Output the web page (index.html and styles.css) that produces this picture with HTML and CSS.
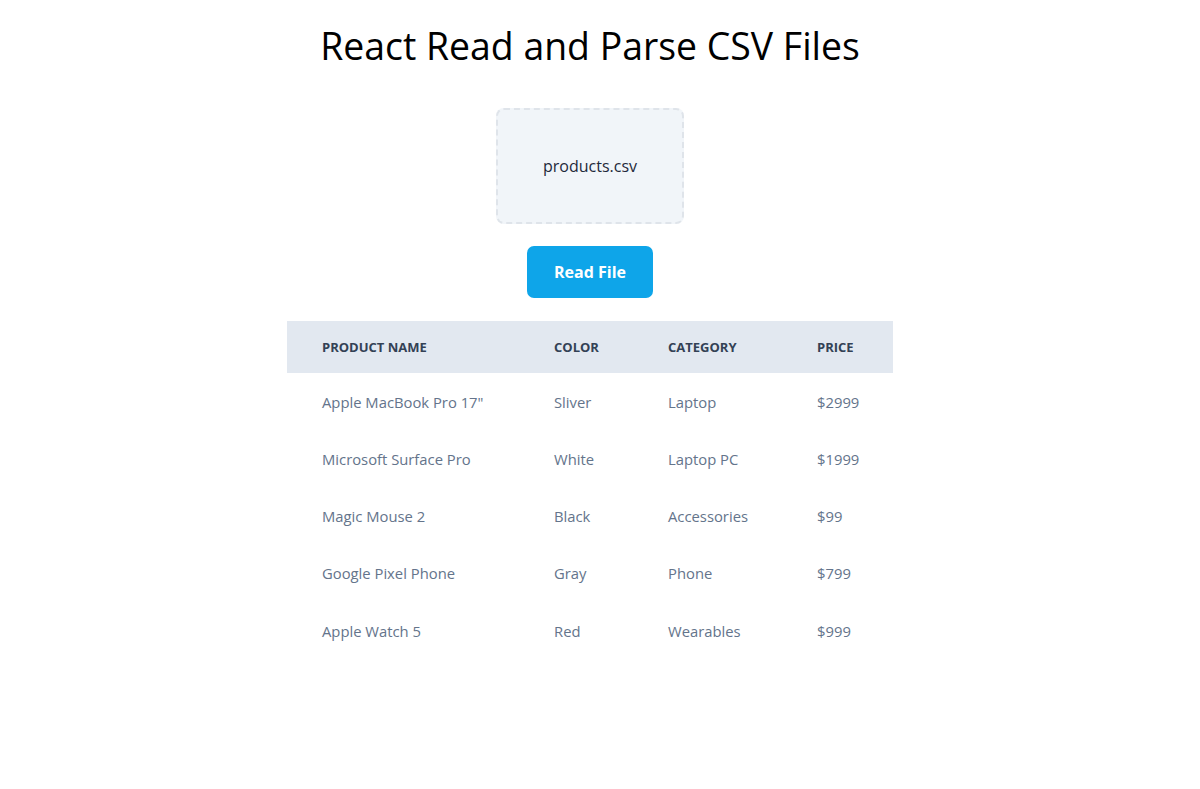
FILE: index.html
```html
<!DOCTYPE html>
<html lang="en">
<head>
<meta charset="utf-8">
<title>React Read and Parse CSV Files</title>
<link rel="stylesheet" href="styles.css">
</head>
<body>
<main class="page">
  <h1 class="title">React Read and Parse CSV Files</h1>
  <div class="dropzone"><span class="file-name">products.csv</span></div>
  <button class="read-btn" type="button">Read File</button>
  <table class="products">
    <colgroup>
      <col class="c1"><col class="c2"><col class="c3"><col class="c4">
    </colgroup>
    <thead>
      <tr><th>Product Name</th><th>Color</th><th>Category</th><th>Price</th></tr>
    </thead>
    <tbody>
      <tr><td>Apple MacBook Pro 17"</td><td>Sliver</td><td>Laptop</td><td>$2999</td></tr>
      <tr><td>Microsoft Surface Pro</td><td>White</td><td>Laptop PC</td><td>$1999</td></tr>
      <tr><td>Magic Mouse 2</td><td>Black</td><td>Accessories</td><td>$99</td></tr>
      <tr><td>Google Pixel Phone</td><td>Gray</td><td>Phone</td><td>$799</td></tr>
      <tr><td>Apple Watch 5</td><td>Red</td><td>Wearables</td><td>$999</td></tr>
    </tbody>
  </table>
</main>
</body>
</html>
```

FILE: styles.css
```css
html, body {
  margin: 0;
  padding: 0;
  background: #ffffff;
}

body {
  font-family: "Open Sans", "Noto Sans", "Liberation Sans", sans-serif;
  color: #0f172a;
}

.page {
  display: flex;
  flex-direction: column;
  align-items: center;
  padding: 0 20px 0 0;
}

.title {
  margin: 22px 0 0;
  font-size: 37.4px;
  line-height: 48px;
  font-weight: 400;
  color: #000000;
}

.dropzone {
  margin-top: 38px;
  box-sizing: border-box;
  width: 188px;
  height: 116px;
  display: flex;
  align-items: center;
  justify-content: center;
  background: #f1f5f9;
  border: 2px dashed #dfe4ea;
  border-radius: 8px;
}

.file-name {
  font-size: 16px;
  color: #1e293b;
}

.read-btn {
  margin-top: 22px;
  width: 126px;
  height: 52px;
  border: 0;
  border-radius: 7px;
  background: #0ea5e9;
  color: #ffffff;
  font-family: inherit;
  font-size: 16px;
  font-weight: 700;
  cursor: pointer;
}

.products {
  margin-top: 23px;
  width: 606px;
  border-collapse: collapse;
  table-layout: fixed;
}

.c1 { width: 232px; }
.c2 { width: 114px; }
.c3 { width: 149px; }
.c4 { width: 111px; }

.products th {
  background: #e2e8f0;
  height: 52px;
  padding: 0 0 0 35px;
  text-align: left;
  font-size: 13px;
  font-weight: 700;
  text-transform: uppercase;
  color: #334155;
}

.products td {
  height: 57.25px;
  padding: 0 0 0 35px;
  font-size: 14.8px;
  color: #64748b;
}
```
